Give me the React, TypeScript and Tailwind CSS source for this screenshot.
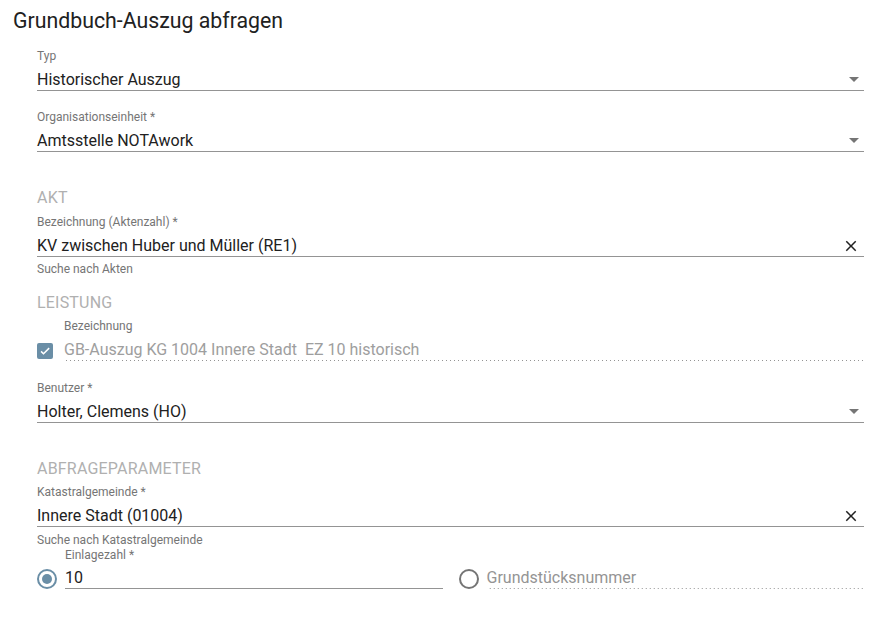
import type { ReactNode } from "react";

const font = { fontFamily: "Roboto, 'Noto Sans', sans-serif" };

function Label({ children, className = "" }: { children: ReactNode; className?: string }) {
  return <div className={`h-[14px] text-[12px] leading-[14px] text-[#757575] ${className}`}>{children}</div>;
}

function Section({ children, className = "" }: { children: ReactNode; className?: string }) {
  return <div className={`h-5 text-[16px] leading-5 uppercase tracking-[0.2px] text-[#b0b0b0] ${className}`}>{children}</div>;
}

function Arrow() {
  return <span className="mr-[5px] h-0 w-0 border-x-[5px] border-t-[5px] border-x-transparent border-t-[#757575]" />;
}

function Clear() {
  return (
    <svg width="18" height="18" viewBox="0 0 24 24" className="mr-[4px] text-[#212121]" fill="currentColor">
      <path d="M19 6.41L17.59 5 12 10.59 6.41 5 5 6.41 10.59 12 5 17.59 6.41 19 12 13.41 17.59 19 19 17.59 13.41 12z" />
    </svg>
  );
}

function Field({ label, value, kind, className = "" }: { label: string; value: string; kind: "select" | "clear"; className?: string }) {
  return (
    <div className={className}>
      <Label>{label}</Label>
      <div className="mt-[6px] flex h-[22px] items-start border-b border-[#949494]">
        <span className="flex-1 text-[16px] leading-[21px] text-[#212121]">{value}</span>
        <span className="flex h-[21px] items-center">{kind === "select" ? <Arrow /> : <Clear />}</span>
      </div>
    </div>
  );
}

const dotted =
  "bg-[linear-gradient(to_right,rgba(0,0,0,0.42)_0%,rgba(0,0,0,0.42)_33%,transparent_0%)] bg-[length:4px_1px] bg-repeat-x bg-bottom";

export default function App() {
  return (
    <div className="h-[617px] w-full bg-white" style={font}>
      <h1 className="h-[41px] pl-[13px] text-[21.3px] leading-[41px] font-normal text-[#212121]">Grundbuch-Auszug abfragen</h1>
      <div className="pl-[37px] pr-[8px]">
        <Field className="mt-[8px]" label="Typ" value="Historischer Auszug" kind="select" />
        <Field className="mt-[19px]" label="Organisationseinheit *" value="Amtsstelle NOTAwork" kind="select" />

        <Section className="mt-[36px]">Akt</Section>
        <Field className="mt-[7px]" label="Bezeichnung (Aktenzahl) *" value="KV zwischen Huber und Müller (RE1)" kind="clear" />
        <div className="mt-[5px] h-[14px] text-[12px] leading-[14px] text-[#757575]">Suche nach Akten</div>

        <Section className="mt-[17px]">Leistung</Section>
        <Label className="mt-[6px] ml-[27px]">Bezeichnung</Label>
        <div className="mt-[6px] flex items-start gap-[11px]">
          <span className="mt-[4px] flex h-4 w-4 items-center justify-center rounded-[2px] bg-[#6a8ea6]">
            <svg width="12" height="12" viewBox="0 0 24 24" fill="none" stroke="white" strokeWidth="3">
              <path d="M4.1 12.7L9 17.6 20.3 6.3" />
            </svg>
          </span>
          <div className={`h-[22px] flex-1 text-[16px] leading-[21px] whitespace-pre text-[#9e9e9e] ${dotted}`}>
            {"GB-Auszug KG 1004 Innere Stadt  EZ 10 historisch"}
          </div>
        </div>

        <Field className="mt-[20px]" label="Benutzer *" value="Holter, Clemens (HO)" kind="select" />

        <Section className="mt-[36px]">Abfrageparameter</Section>
        <Field className="mt-[6px]" label="Katastralgemeinde *" value="Innere Stadt (01004)" kind="clear" />
        <div className="mt-[6px] h-[14px] text-[12px] leading-[14px] text-[#757575]">Suche nach Katastralgemeinde</div>

        <div className="mt-[1px] flex gap-4">
          <div className="flex flex-1 items-end gap-2">
            <span className="flex h-5 w-5 shrink-0 items-center justify-center rounded-full border-2 border-[#6a8ea6]">
              <span className="h-[10px] w-[10px] rounded-full bg-[#6a8ea6]" />
            </span>
            <div className="flex-1">
              <Label>Einlagezahl *</Label>
              <div className="mt-[5px] h-[22px] border-b border-[#949494] text-[16px] leading-[21px] text-[#212121]">10</div>
            </div>
          </div>
          <div className="flex flex-1 items-end gap-2">
            <span className="h-5 w-5 shrink-0 rounded-full border-2 border-[#757575]" />
            <div className={`h-[22px] flex-1 text-[16px] leading-[21px] text-[#949494] ${dotted}`}>Grundstücksnummer</div>
          </div>
        </div>
      </div>
    </div>
  );
}
